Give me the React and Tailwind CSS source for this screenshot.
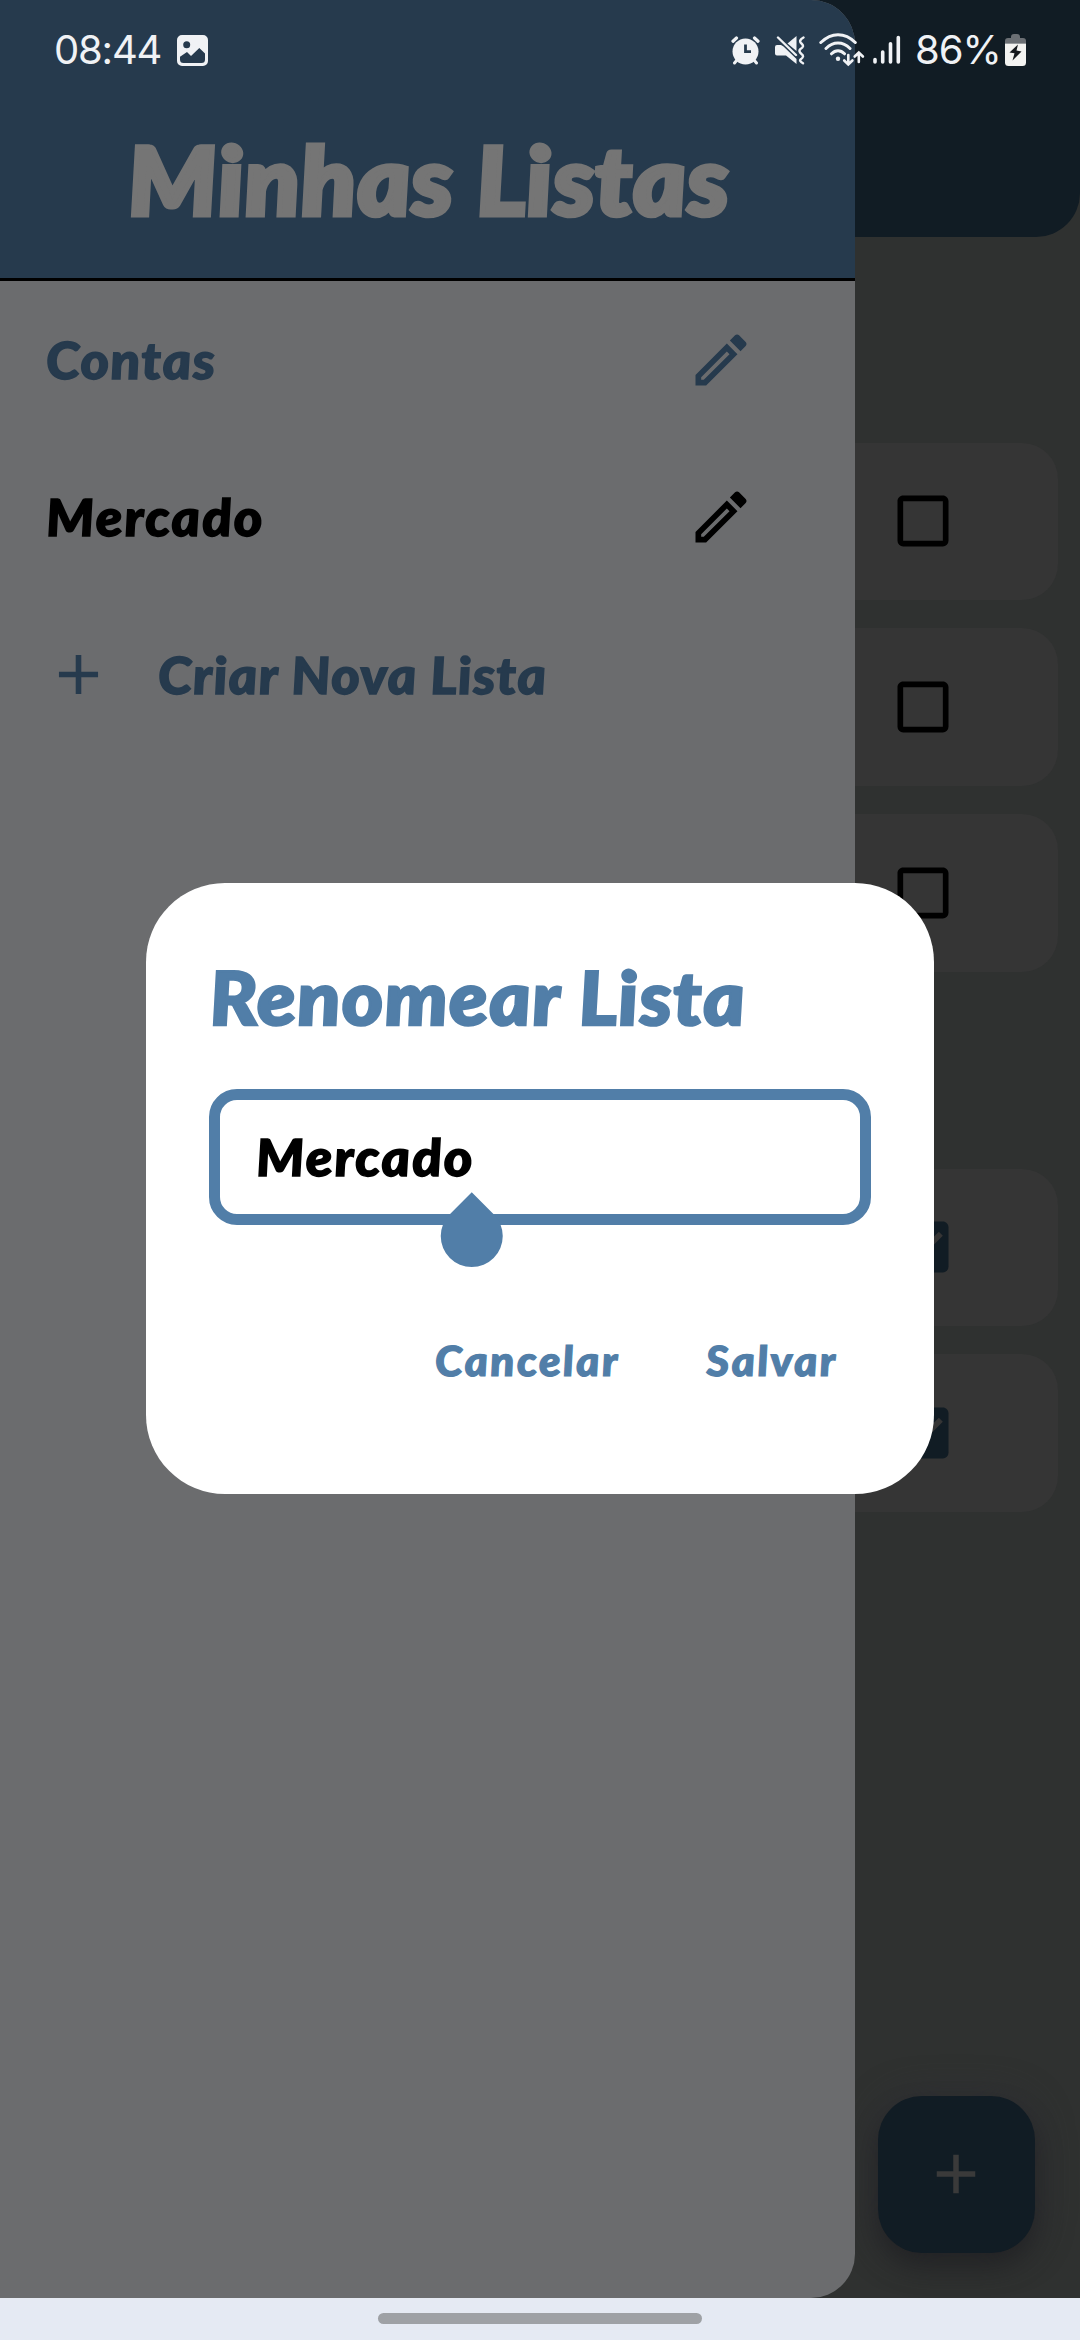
const PENCIL =
  "M14.06 9L15 9.94L5.92 19H5V18.08L14.06 9M17.66 3C17.41 3 17.15 3.1 16.96 3.29L15.13 5.12L18.88 8.87L20.71 7.04C21.1 6.65 21.1 6 20.71 5.63L18.37 3.29C18.17 3.09 17.92 3 17.66 3M14.06 6.19L3 17.25V21H6.75L17.81 9.94L14.06 6.19Z";
const BOX =
  "M19 3H5C3.89 3 3 3.89 3 5V19A2 2 0 0 0 5 21H19A2 2 0 0 0 21 19V5C21 3.89 20.1 3 19 3M19 5V19H5V5H19Z";
const BOX_CHECKED =
  "M10 17L5 12L6.41 10.58L10 14.17L17.59 6.58L19 8M19 3H5C3.89 3 3 3.89 3 5V19A2 2 0 0 0 5 21H19A2 2 0 0 0 21 19V5C21 3.89 20.1 3 19 3Z";
const PLUS = "M19 13H13V19H11V13H5V11H11V5H13V11H19V13Z";

function Icon({ d, className }) {
  return (
    <svg viewBox="0 0 24 24" fill="currentColor" className={`shrink-0 ${className}`}>
      <path d={d} />
    </svg>
  );
}

function Slanted({ className, children }) {
  return (
    <span
      className={`inline-block origin-[0_75%] whitespace-pre font-['Lato',sans-serif] font-black italic [transform:scaleX(1.07)_skewX(4deg)] ${className}`}
    >
      {children}
    </span>
  );
}

function ItemCard({ checked }) {
  return (
    <div className="flex h-[157.5px] items-center justify-end rounded-[36px] bg-[#353535] pr-[101px]">
      <Icon
        d={checked ? BOX_CHECKED : BOX}
        className={checked ? "size-[68px] text-[#111c24]" : "size-[68px] text-black"}
      />
    </div>
  );
}

function ListScreen() {
  return (
    <div className="flex h-full flex-col bg-[#2f3130]">
      <div className="h-[237px] shrink-0 rounded-b-[44px] bg-[#111c24]" />
      <div className="mt-[205.5px] flex flex-col gap-[28.3px] px-[22px]">
        <ItemCard />
        <ItemCard />
        <ItemCard />
      </div>
      <div className="mt-[197px] flex flex-col gap-[28.3px] px-[22px]">
        <ItemCard checked />
        <ItemCard checked />
      </div>
      <div className="mt-auto mr-[45px] mb-[45px] flex size-[157.5px] items-center justify-center self-end rounded-[44px] bg-[#111c24] shadow-[0_14px_28px_rgba(0,0,0,0.28),0_2px_36px_rgba(48,48,54,0.9)]">
        <Icon d={PLUS} className="size-[66px] text-[#3a3a3a]" />
      </div>
    </div>
  );
}

function ListRow({ name, className }) {
  return (
    <div className={`flex h-[157.5px] items-center justify-between pr-[100px] pl-[47px] ${className}`}>
      {name}
      <Icon d={PENCIL} className="size-[68px]" />
    </div>
  );
}

function Drawer() {
  return (
    <div className="flex h-full w-[855px] flex-col overflow-hidden rounded-r-[44px] bg-[#6b6c6e]">
      <div className="h-[281px] shrink-0 border-b-[3px] border-black bg-[#263a4d] pt-[113px] pl-[130px]">
        <Slanted className="text-[94px] leading-[132px] tracking-[1.3px] text-[#757575] [-webkit-text-stroke:5px_#757575]">
          Minhas Listas
        </Slanted>
      </div>
      <ListRow
        className="text-[#263a4d]"
        name={
          <Slanted className="text-[51px] leading-[64px] tracking-[1.4px] [-webkit-text-stroke:1.5px_#263a4d]">
            Contas
          </Slanted>
        }
      />
      <ListRow
        className="text-black"
        name={
          <Slanted className="text-[51px] leading-[64px] tracking-[1.8px] [-webkit-text-stroke:1.5px_#000]">
            Mercado
          </Slanted>
        }
      />
      <div className="flex h-[157.5px] items-center pl-[45px] text-[#263a4d]">
        <Icon d={PLUS} className="size-[67px]" />
        <Slanted className="ml-[47px] text-[51px] leading-[64px] tracking-[1.2px] [-webkit-text-stroke:1.5px_#263a4d]">
          Criar Nova Lista
        </Slanted>
      </div>
    </div>
  );
}

function RenameDialog() {
  return (
    <div className="mt-[883px] ml-[146px] flex h-[611px] w-[788px] flex-col rounded-[79px] bg-white px-[63px] pt-[69px] text-[#517ea8]">
      <Slanted className="self-start pl-[2px] text-[74px] leading-[90px] tracking-[1.3px] [-webkit-text-stroke:2.5px_#517ea8]">
        Renomear Lista
      </Slanted>
      <div className="relative mt-[47px] flex h-[136px] shrink-0 items-center rounded-[28px] border-[11px] border-[#517ea8] pl-[37px]">
        <Slanted className="text-[51px] leading-[64px] tracking-[1.8px] text-black [-webkit-text-stroke:1.5px_#000]">
          Mercado
        </Slanted>
        <div className="absolute top-[105px] left-[221px] size-[61.5px] rotate-45 rounded-r-full rounded-bl-full bg-[#517ea8]" />
      </div>
      <div className="mt-[105px] flex justify-end gap-[98px] pr-[41px]">
        <Slanted className="text-[41.5px] leading-[60px] tracking-[2.2px] [-webkit-text-stroke:1.2px_#517ea8]">
          Cancelar
        </Slanted>
        <Slanted className="text-[41.5px] leading-[60px] tracking-[2.2px] [-webkit-text-stroke:1.2px_#517ea8]">
          Salvar
        </Slanted>
      </div>
    </div>
  );
}

function StatusBar() {
  return (
    <div className="flex h-[100px] items-center pr-[54px] pl-[54px] font-['Inter',sans-serif] text-[40px] leading-none text-[#f0f2f5]">
      <span className="w-[123px] font-normal tracking-[-1.2px]">08:44</span>
      <svg viewBox="0 0 31 31" className="size-[31px]">
        <path
          fill="currentColor"
          fillRule="evenodd"
          d="M5 0H26A5 5 0 0 1 31 5V26A5 5 0 0 1 26 31H5A5 5 0 0 1 0 26V5A5 5 0 0 1 5 0ZM9.7 6.3A3.5 3.5 0 1 0 9.7 13.3A3.5 3.5 0 1 0 9.7 6.3ZM3 21.8V24.5Q3 28 6.5 28H24.5Q28 28 28 24.5V18.5L22.3 13L14 21L10 17Z"
        />
      </svg>
      <svg viewBox="0 0 29 29" className="ml-auto size-[29px]" fill="none" stroke="currentColor" strokeLinecap="round">
        <circle cx="14.5" cy="15.5" r="13" fill="currentColor" stroke="none" />
        <path d="M2 5.2L5.5 2M27 5.2L23.5 2" strokeWidth="3.2" />
        <path d="M6 24L3.5 27M23 24L25.5 27" strokeWidth="3" />
        <path d="M14.5 8.5V15.7H20" stroke="#263a4d" strokeWidth="2.8" strokeLinecap="butt" />
      </svg>
      <svg viewBox="0 0 30 30" className="ml-[15px] size-[30px]" fill="currentColor">
        <path d="M2 10H6L8.5 11.5L21.5 24V29L11 20.5H2Q0 20.5 0 18.5V12Q0 10 2 10Z" />
        <path d="M21.5 1V16L12.5 8.5Z" />
        <path
          d="M3 2.5L21 20M28.5 2.5Q23 5.5 26.5 8.5Q30 11.5 25.5 14Q23 16 26.5 19Q30 21.5 25.5 24.5Q24 26 28 28.3"
          fill="none"
          stroke="currentColor"
          strokeWidth="2.4"
          strokeLinecap="round"
        />
      </svg>
      <svg viewBox="0 0 46 34" className="ml-[14px] h-[34px] w-[46px]" fill="none" stroke="currentColor" strokeWidth="3" strokeLinecap="round">
        <path d="M1.8 9.5Q10 1.7 19 1.7Q28.5 1.7 36.3 9.5M7 15.5Q12.5 10 19 10Q25.5 10 31 15.5M12.5 20.8Q15.5 17.8 19 17.8Q22.5 17.8 25.5 20.8" />
        <circle cx="19" cy="25.8" r="2.2" fill="currentColor" stroke="none" />
        <path d="M29.3 22V31M25.2 27.5L29.3 31.5L33.4 27.5M39.8 29V20M35.7 23.5L39.8 19.5L43.9 23.5" strokeWidth="2.6" />
      </svg>
      <svg viewBox="0 0 28 30" className="ml-[8px] h-[30px] w-[28px]" stroke="currentColor" strokeWidth="3.6" strokeLinecap="round">
        <path d="M2 24.5V27M9.7 17V27M17.5 8.7V27M25.3 2.5V27" />
      </svg>
      <span className="ml-[14px] w-[90px] font-normal tracking-[-1px] whitespace-nowrap">86%</span>
      <svg viewBox="0 0 21 32" className="h-[32px] w-[21px]">
        <path d="M0 9.5V7Q0 4 3 4H6V3Q6 0 9 0H12Q15 0 15 3V4H18Q21 4 21 7V9.5Z" fill="#6b6f74" />
        <path d="M0 9.5H21V28.5Q21 32 17.5 32H3.5Q0 32 0 28.5Z" fill="#f3f3f1" />
        <path d="M13 10.5L4.5 18.5L9.5 19.2L7.5 26.5L16.5 17.5L11.5 16.5Z" fill="#14181c" />
      </svg>
    </div>
  );
}

export default function App() {
  return (
    <div className="relative flex h-[2340px] w-[1080px] flex-col overflow-hidden">
      <div className="relative h-[2298px] shrink-0 overflow-hidden">
        <ListScreen />
        <div className="absolute inset-0">
          <Drawer />
        </div>
        <div className="absolute inset-0">
          <RenameDialog />
        </div>
        <div className="absolute inset-x-0 top-0">
          <StatusBar />
        </div>
      </div>
      <div className="flex h-[42px] items-center justify-center bg-[#e5eaf3] pb-[1px]">
        <div className="h-[11px] w-[324px] rounded-full bg-[#9ea1a5]" />
      </div>
    </div>
  );
}
